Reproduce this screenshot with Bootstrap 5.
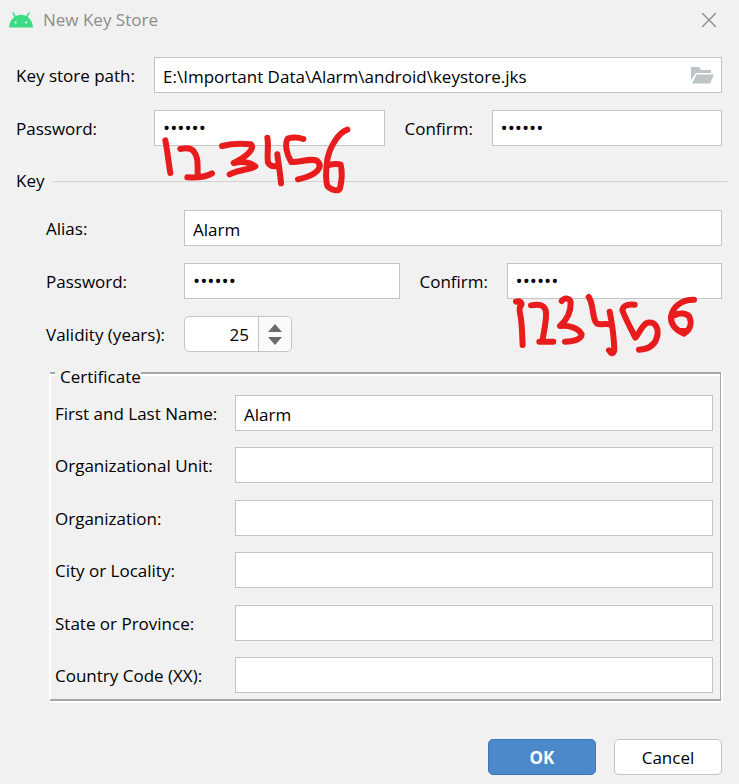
<!DOCTYPE html>
<html lang="en">
<head>
<meta charset="utf-8">
<meta name="viewport" content="width=device-width, initial-scale=1">
<title>New Key Store</title>
<link href="https://cdn.jsdelivr.net/npm/bootstrap@5.3.0/dist/css/bootstrap.min.css" rel="stylesheet">
<style>
  body { background: #f1f1f1; color: #000; font-family: "Open Sans", "Noto Sans", sans-serif; font-size: 17px; line-height: 24px; }
  .titlebar { height: 40px; padding: 0 21px 0 9px; gap: 10px; color: #8c8c8c; }
  .title-close { color: #8c8c8c; line-height: 0; }
  .form-area { padding: 17px 17px 0 16px; }
  .form-area label { padding-top: 2px; }
  .stack { display: flex; flex-direction: column; gap: 17px; }
  .key-fields { padding-left: 30px; margin-top: 17px; }
  .label-main { width: 138px; flex: none; }
  .label-confirm { width: 87px; margin-left: 20px; flex: none; }
  .label-cert { width: 180px; flex: none; }
  .field { height: 36px; padding: 0 8px; border: 1px solid #c4c4c4; border-radius: 0; color: #000; background: #fff; font-size: 17px; line-height: 24px; }
  .field[type=text] { padding-top: 2px; }
  .field[type=password] { font-size: 19px; }
  .field-path { padding-right: 40px; }
  .browse { right: 8px; top: 9px; line-height: 0; }
  .section-head { margin: 23px -5px 0 0; gap: 9px; }
  .section-line { border-top: 1px solid #d1d1d1; }
  .spinner-box { width: 108px; height: 36px; border: 1px solid #c4c4c4; border-radius: 5px; background: #fff; overflow: hidden; }
  .spinner-box input { min-width: 0; appearance: textfield; -moz-appearance: textfield; font-size: 17px; color: #000; padding: 2px 9px 0 0; }
  .spinner-box input::-webkit-inner-spin-button { display: none; }
  .spinner-keys { width: 33px; flex: none; border-left: 1px solid #c4c4c4; background: #fafafa; gap: 5px; }
  .spinner-keys button { line-height: 0; }
  .cert { margin: 9px 1px 0 33px; padding: 0 7px 6px 4px; border: solid #a6a6a6; border-width: 2px 1px 2px 2px; border-left-color: #fff; box-shadow: 2px 0 #fff, 0 2px #fff, 2px 2px #fff, inset 0 2px #fff; }
  .cert legend { float: none; width: auto; font-size: 17px; line-height: 16px; margin: 0 0 10px; padding: 8px 0 0 5px; background: #f1f1f1; }
  .cert-rows { min-height: 298px; }
  .scribble { left: 0; top: 0; overflow: visible; pointer-events: none; fill: none; stroke: #e81c1c; stroke-width: 18; stroke-linecap: round; stroke-linejoin: round; z-index: 2; }
  .actions { gap: 18px; margin-top: 38px; padding-bottom: 10px; }
  .dlg-btn { width: 108px; height: 36px; padding: 2px 0 0; font-size: 17px; line-height: 24px; border-radius: 5px; }
  .dlg-ok { background: #4c89ca; border: 1px solid #3b75b5; color: #fff; font-weight: 700; }
  .dlg-cancel { background: #fff; border: 1px solid #c4c4c4; color: #000; }
</style>
<script src="https://cdn.jsdelivr.net/npm/bootstrap@5.3.0/dist/js/bootstrap.bundle.min.js"></script>
</head>
<body>
<header class="titlebar d-flex align-items-center">
  <svg width="24" height="16" viewBox="0 0 24 16" aria-hidden="true">
    <path d="M4 1l2.500 4M20 1l-2.500 4" stroke="#3ddc84" stroke-width="1.500" stroke-linecap="round"/>
    <path d="M0 15.500C.4 8 5.500 2.800 12 2.800S23.600 8 24 15.500z" fill="#3ddc84"/>
    <circle cx="6.700" cy="10.500" r="1" fill="#fff"/><circle cx="17.300" cy="10.500" r="1" fill="#fff"/>
  </svg>
  <span>New Key Store</span>
  <button type="button" class="title-close btn p-0 border-0 ms-auto" aria-label="Close">
    <svg width="18" height="18" viewBox="0 0 18 18" fill="none" stroke="currentColor" stroke-width="1.400" stroke-linecap="round"><path d="M2.500 2.500l13 13M15.500 2.500l-13 13"/></svg>
  </button>
</header>

<form class="form-area">
  <div class="stack">
    <div class="d-flex align-items-center">
      <label class="label-main" for="path">Key store path:</label>
      <div class="position-relative flex-fill">
        <input id="path" type="text" class="field field-path w-100 d-block" value="E:\Important Data\Alarm\android\keystore.jks">
        <button type="button" class="browse btn p-0 border-0 position-absolute" aria-label="Browse">
          <svg width="23" height="18" viewBox="0 0 23 18" fill="#bfc4c9"><path d="M0 1h8l2 3h10v3H5L0 14z"/><path d="M5.500 8.500H23L19 17.500H1z"/></svg>
        </button>
      </div>
    </div>
    <div class="d-flex align-items-center">
      <label class="label-main" for="storePw">Password:</label>
      <div class="position-relative flex-fill">
        <input id="storePw" type="password" class="field w-100 d-block" value="123456" autocomplete="off">
        <svg class="scribble position-absolute" width="231" height="90" viewBox="42 30 693 270" aria-hidden="true">
          <path d="M76 121C82 150 86 190 91 219"/>
          <path d="M121 147C140 143 150 143 160 152C174 168 173 185 173 229M142 232C170 233 200 230 216 220"/>
          <path d="M246 138C270 132 300 130 333 133C345 143 325 168 281 189C305 183 330 187 346 199C340 207 300 208 269 223"/>
          <path d="M382 113C387 140 380 165 384 188C390 199 403 200 412 198M412 163C415 190 421 220 423 250"/>
          <path d="M490 117C475 112 455 112 443 116C433 130 440 165 454 186C475 188 520 172 533 184C548 200 535 225 474 238"/>
          <path d="M622 89C595 98 570 140 562 178C559 200 555 235 562 258C575 272 595 275 600 265C606 240 607 215 602 194C590 190 578 192 566 195"/>
        </svg>
      </div>
      <label class="label-confirm" for="storePw2">Confirm:</label>
      <div class="flex-fill">
        <input id="storePw2" type="password" class="field w-100 d-block" value="123456" autocomplete="off">
      </div>
    </div>
  </div>

  <div class="section-head d-flex align-items-center">
    <span>Key</span><div class="section-line flex-fill"></div>
  </div>

  <div class="key-fields stack">
    <div class="d-flex align-items-center">
      <label class="label-main" for="alias">Alias:</label>
      <input id="alias" type="text" class="field flex-fill" value="Alarm">
    </div>
    <div class="d-flex align-items-center">
      <label class="label-main" for="keyPw">Password:</label>
      <div class="flex-fill">
        <input id="keyPw" type="password" class="field w-100 d-block" value="123456" autocomplete="off">
      </div>
      <label class="label-confirm" for="keyPw2">Confirm:</label>
      <div class="position-relative flex-fill">
        <input id="keyPw2" type="password" class="field w-100 d-block" value="123456" autocomplete="off">
        <svg class="scribble position-absolute" width="215" height="95" viewBox="51 24 645 285" aria-hidden="true">
          <path d="M78 140C90 136 96 142 94 150C86 156 88 168 91 180C97 210 96 240 98 270"/>
          <path d="M123 151C150 146 166 150 168 172C170 200 160 235 157 260M148 260H190"/>
          <path d="M215 138C225 126 240 130 242 142C243 170 230 195 210 213C235 210 265 218 275 238C275 255 245 260 225 260"/>
          <path d="M296 126C312 145 306 205 325 207C345 209 350 205 358 208M359 170C365 200 372 250 373 285C370 301 362 295 357 286"/>
          <path d="M434 149C415 147 400 152 397 165C403 185 420 215 436 248C448 235 455 210 473 203C495 200 503 215 503 235C500 262 485 282 447 284"/>
          <path d="M612 134C575 133 548 155 543 185C542 205 550 222 582 236C600 225 607 205 598 185C590 175 570 172 555 180M572 228H590"/>
        </svg>
      </div>
    </div>
    <div class="d-flex align-items-center">
      <label class="label-main" for="years">Validity (years):</label>
      <div class="spinner-box d-flex">
        <input id="years" type="number" class="border-0 bg-transparent flex-fill text-end" value="25">
        <div class="spinner-keys d-flex flex-column align-items-center justify-content-center">
          <button type="button" class="btn p-0 border-0" aria-label="Increase"><svg width="14" height="8" viewBox="0 0 14 8" fill="#6b6b6b"><path d="M7 0l7 8H0z"/></svg></button>
          <button type="button" class="btn p-0 border-0" aria-label="Decrease"><svg width="14" height="8" viewBox="0 0 14 8" fill="#6b6b6b"><path d="M7 8l7-8H0z"/></svg></button>
        </div>
      </div>
    </div>
  </div>

  <fieldset class="cert">
    <legend>Certificate</legend>
    <div class="cert-rows d-flex flex-column justify-content-between">
      <div class="d-flex align-items-center"><label class="label-cert" for="cn">First and Last Name:</label><input id="cn" type="text" class="field flex-fill" value="Alarm"></div>
      <div class="d-flex align-items-center"><label class="label-cert" for="ou">Organizational Unit:</label><input id="ou" type="text" class="field flex-fill"></div>
      <div class="d-flex align-items-center"><label class="label-cert" for="org">Organization:</label><input id="org" type="text" class="field flex-fill"></div>
      <div class="d-flex align-items-center"><label class="label-cert" for="city">City or Locality:</label><input id="city" type="text" class="field flex-fill"></div>
      <div class="d-flex align-items-center"><label class="label-cert" for="state">State or Province:</label><input id="state" type="text" class="field flex-fill"></div>
      <div class="d-flex align-items-center"><label class="label-cert" for="cc">Country Code (XX):</label><input id="cc" type="text" class="field flex-fill"></div>
    </div>
  </fieldset>

  <div class="actions d-flex justify-content-end">
    <button type="submit" class="btn dlg-btn dlg-ok">OK</button>
    <button type="button" class="btn dlg-btn dlg-cancel">Cancel</button>
  </div>
</form>
</body>
</html>
